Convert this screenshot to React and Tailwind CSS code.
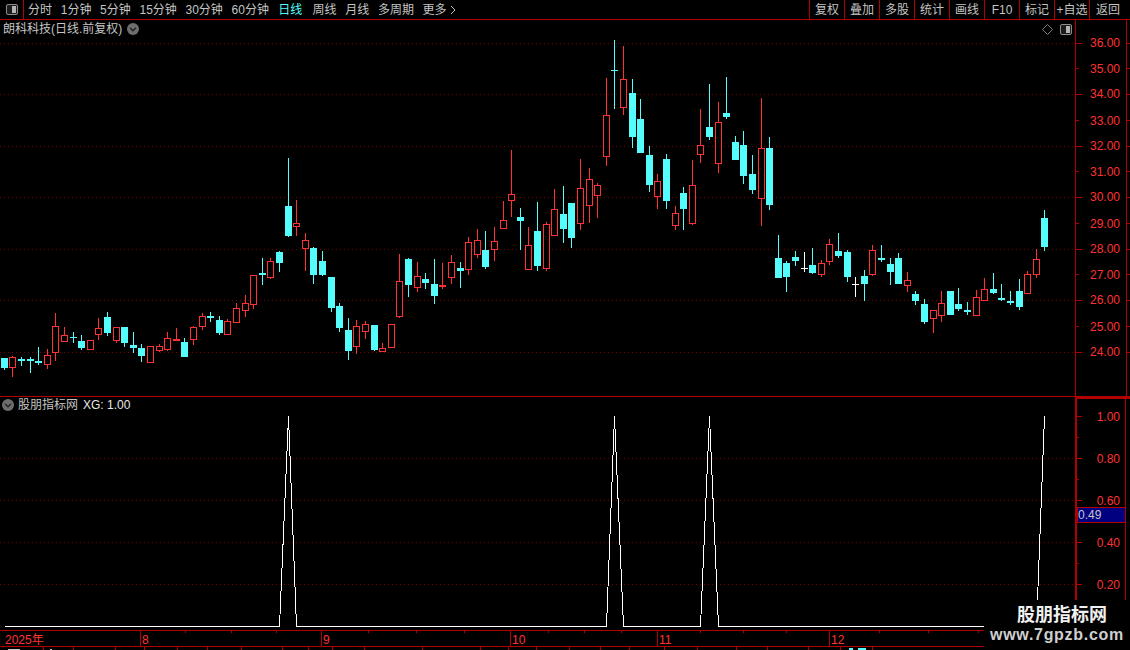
import React from 'react';

// [x, high, top, bottom, low, kind] kind: c = cyan solid, r = red hollow, R = red solid, w = white cross
const candles = [
  [4, 358, 358, 368, 370, 'c'], [12, 356, 357, 367, 377, 'r'], [21, 357, 359, 361, 366, 'c'], [30, 357, 359, 361, 373, 'c'],
  [38, 347, 361, 363, 365, 'c'], [47, 349, 355, 364, 369, 'r'], [55, 313, 326, 352, 361, 'r'], [64, 327, 335, 341, 342, 'r'],
  [73, 332, 337, 338, 343, 'c'], [81, 335, 341, 348, 350, 'c'], [90, 340, 340, 349, 349, 'r'], [98, 318, 328, 334, 340, 'r'],
  [107, 312, 317, 333, 336, 'c'], [116, 327, 327, 340, 343, 'r'], [124, 327, 327, 343, 347, 'c'], [133, 332, 345, 348, 353, 'c'],
  [141, 344, 348, 356, 362, 'c'], [150, 346, 346, 362, 362, 'r'], [159, 344, 346, 350, 352, 'r'], [167, 332, 338, 349, 351, 'r'],
  [176, 328, 339, 341, 341, 'R'], [184, 338, 342, 357, 357, 'c'], [193, 326, 327, 339, 345, 'r'], [202, 313, 316, 326, 330, 'r'],
  [210, 312, 316, 318, 322, 'c'], [219, 316, 320, 333, 335, 'c'], [227, 319, 321, 334, 334, 'r'], [236, 303, 308, 322, 323, 'r'],
  [245, 295, 303, 310, 317, 'r'], [253, 275, 275, 304, 309, 'r'], [262, 258, 273, 275, 285, 'c'], [270, 258, 261, 277, 279, 'r'],
  [279, 251, 252, 263, 272, 'c'], [288, 158, 206, 236, 237, 'c'], [296, 200, 223, 226, 236, 'r'], [305, 233, 240, 248, 271, 'r'],
  [313, 247, 248, 275, 284, 'c'], [322, 251, 261, 275, 276, 'c'], [331, 277, 277, 308, 312, 'c'], [339, 303, 306, 328, 332, 'c'],
  [348, 318, 330, 351, 360, 'c'], [356, 320, 326, 346, 354, 'r'], [365, 321, 324, 331, 339, 'r'], [374, 325, 325, 350, 351, 'c'],
  [382, 343, 348, 351, 351, 'r'], [391, 324, 324, 347, 348, 'r'], [399, 254, 281, 316, 318, 'r'], [408, 258, 259, 285, 297, 'c'],
  [417, 262, 276, 287, 292, 'r'], [425, 273, 279, 283, 289, 'c'], [434, 259, 284, 296, 304, 'c'], [442, 263, 285, 287, 289, 'R'],
  [451, 255, 262, 277, 284, 'r'], [460, 262, 268, 271, 288, 'c'], [468, 237, 242, 269, 275, 'r'], [477, 229, 240, 254, 258, 'r'],
  [485, 231, 250, 267, 269, 'c'], [494, 227, 241, 249, 261, 'r'], [503, 201, 220, 228, 228, 'r'], [511, 150, 194, 200, 217, 'r'],
  [520, 208, 217, 221, 250, 'c'], [528, 227, 245, 269, 269, 'r'], [537, 202, 231, 266, 271, 'c'], [546, 222, 224, 268, 271, 'r'],
  [554, 189, 209, 235, 235, 'r'], [563, 186, 214, 229, 243, 'c'], [571, 203, 203, 238, 248, 'c'], [580, 159, 188, 223, 230, 'r'],
  [589, 168, 179, 205, 223, 'r'], [597, 183, 185, 195, 218, 'r'], [606, 78, 115, 156, 166, 'r'], [614, 40, 70, 71, 109, 'c'],
  [623, 46, 79, 107, 115, 'r'], [632, 79, 93, 137, 148, 'c'], [640, 99, 119, 153, 153, 'c'], [649, 146, 155, 185, 192, 'c'],
  [657, 174, 181, 196, 209, 'r'], [666, 154, 159, 201, 209, 'c'], [675, 206, 213, 225, 230, 'r'], [683, 187, 193, 209, 230, 'c'],
  [692, 160, 185, 223, 225, 'r'], [700, 109, 145, 154, 163, 'r'], [709, 84, 127, 137, 140, 'c'], [718, 102, 122, 163, 173, 'r'],
  [726, 77, 113, 117, 119, 'c'], [735, 136, 142, 160, 160, 'c'], [743, 131, 145, 176, 184, 'c'], [752, 155, 174, 190, 194, 'c'],
  [761, 98, 148, 198, 226, 'r'], [769, 137, 148, 205, 210, 'c'], [778, 235, 258, 278, 278, 'c'], [786, 261, 263, 277, 292, 'c'],
  [795, 251, 257, 261, 266, 'c'], [804, 252, 268, 269, 272, 'w'], [812, 248, 265, 273, 274, 'c'], [821, 260, 263, 274, 277, 'r'],
  [829, 239, 244, 261, 265, 'r'], [838, 233, 251, 256, 258, 'c'], [847, 250, 252, 277, 282, 'c'], [855, 277, 284, 285, 297, 'w'],
  [864, 270, 276, 284, 301, 'c'], [872, 245, 250, 274, 276, 'r'], [881, 245, 258, 260, 262, 'c'], [890, 258, 264, 272, 285, 'c'],
  [898, 253, 258, 284, 284, 'c'], [907, 272, 280, 285, 292, 'r'], [915, 291, 294, 301, 305, 'c'], [924, 299, 304, 322, 324, 'c'],
  [933, 310, 310, 318, 333, 'r'], [941, 291, 303, 315, 322, 'r'], [950, 291, 291, 315, 315, 'c'], [958, 288, 304, 309, 311, 'c'],
  [967, 302, 310, 312, 315, 'c'], [976, 290, 297, 315, 315, 'r'], [984, 278, 289, 300, 301, 'r'], [993, 273, 289, 293, 294, 'c'],
  [1001, 284, 298, 300, 301, 'c'], [1010, 291, 301, 303, 305, 'c'], [1019, 279, 291, 307, 310, 'c'], [1027, 271, 274, 293, 294, 'r'],
  [1036, 249, 259, 274, 278, 'r'], [1044, 210, 218, 247, 251, 'c'],
];

const RED = '#ff3232';
const CYAN = '#54fcfc';
const LINE = '#b00000';
const DOT = '#700000';

const priceLabels = [36, 35, 34, 33, 32, 31, 30, 29, 28, 27, 26, 25, 24];
const priceY = (v) => Math.round(42.5 + (36 - v) * 25.75);
const indicatorLabels = [
  [1, 416], [0.8, 458], [0.6, 500], [0.4, 542], [0.2, 584],
];
const xgLine = '4.5,626.5 279.5,626.5 288.5,416.5 296.5,626.5 606.5,626.5 614.5,416.5 623.5,626.5 700.5,626.5 709.5,416.5 718.5,626.5 1036.5,626.5 1044.5,416.5';

const timeTicks = [185, 231, 276, 368, 416, 464, 548, 584, 621, 700, 743, 786, 879, 928, 978];
const stripTicks = [43, 73, 115, 144, 177, 207, 241, 282, 308, 332, 364, 422, 480, 508, 536, 569, 600, 629, 664, 697, 736, 767, 808, 840, 872];

const Candle = ({ c }) => {
  const [x, high, top, bottom, low, kind] = c;
  const color = kind === 'c' ? CYAN : kind === 'w' ? '#ffffff' : RED;
  const h = Math.max(bottom - top, 1);
  return (
    <g shapeRendering="crispEdges">
      <rect x={x} y={high} width="1" height={low - high} fill={color} />
      {kind === 'r' ? (
        <rect x={x - 2.5} y={top + 0.5} width="6" height={h} fill="#000" stroke={color} strokeWidth="1" />
      ) : (
        <rect x={x - 3} y={top} width="7" height={h} fill={color} />
      )}
    </g>
  );
};

const Chevron = () => (
  <svg width="12" height="12" viewBox="0 0 12 12" className="block shrink-0">
    <circle cx="6" cy="6" r="6" fill="#6e6e6e" />
    <path d="M3 4.8 L6 7.8 L9 4.8" fill="none" stroke="#222" strokeWidth="1.4" />
  </svg>
);

const PanelIcon = () => (
  <svg width="12" height="11" viewBox="0 0 12 11" className="block shrink-0">
    <rect x="0.5" y="0.5" width="11" height="10" rx="1.5" fill="#1c1c1c" stroke="#8c8c8c" />
    <rect x="6" y="2" width="4" height="7" fill="#b4b4b4" />
  </svg>
);

const tabs = [
  ['分时', ''], ['1分钟', ''], ['5分钟', ''], ['15分钟', ''], ['30分钟', ''], ['60分钟', ''],
  ['日线', 'mx-[0.6px] text-[#54fcfc]'], ['周线', 'ml-px'], ['月线', ''], ['多周期', ''],
];
const tools = ['复权', '叠加', '多股', '统计', '画线', 'F10', '标记', '+自选'];

export default function App() {
  return (
    <div className="relative w-[1130px] h-[650px] overflow-hidden bg-black text-xs leading-none text-[#c4c4c4] font-['Liberation_Sans','Noto_Sans_CJK_SC',sans-serif]">
      {/* toolbar */}
      <div className="flex h-5 border-b border-[#b00000]">
        <div className="flex w-6 items-center justify-center border-r border-[#b00000]">
          <PanelIcon />
        </div>
        <div className="flex items-center gap-[8.7px] pl-1">
          {tabs.map(([t, cls]) => (
            <span key={t} className={cls}>{t}</span>
          ))}
          <span className="flex items-center gap-[3px]">
            更多
            <svg width="6" height="10" viewBox="0 0 6 10" className="block">
              <path d="M1 1 L5 5 L1 9" fill="none" stroke="#c4c4c4" strokeWidth="1" />
            </svg>
          </span>
        </div>
        <div className="ml-auto flex">
          {tools.map((t) => (
            <span key={t} className="flex w-[35px] items-center justify-center border-l border-[#b00000]">{t}</span>
          ))}
          <span className="flex w-[41px] items-center border-l border-[#b00000] pl-[6px]">返回</span>
        </div>
      </div>

      {/* price panel */}
      <div className="flex h-[376px] border-b border-[#b00000] box-content">
        <div className="relative w-[1075px]">
          <svg className="absolute inset-0 block" width="1075" height="376" viewBox="0 20 1075 376">
            {[36, 34, 32, 30, 28, 26, 24].map((v) => (
              <line key={v} x1="0" x2="1075" y1={priceY(v) + 0.5} y2={priceY(v) + 0.5} stroke={DOT} strokeDasharray="1 3" />
            ))}
            {candles.map((c) => <Candle key={c[0]} c={c} />)}
          </svg>
          <div className="relative flex items-center gap-[5px] pl-[3px] pt-[3px]">
            <span>朗科科技(日线.前复权)</span>
            <Chevron />
          </div>
          <div className="absolute right-[3px] top-1 flex items-center gap-[7px]">
            <svg width="11" height="11" viewBox="0 0 11 11" className="block">
              <path d="M5.5 0.5 L10.5 5.5 L5.5 10.5 L0.5 5.5 Z" fill="none" stroke="#7c7c7c" />
            </svg>
            <PanelIcon />
          </div>
        </div>
        <div className="w-[55px] border-l border-[#b00000]">
          <svg className="block" width="54" height="376" viewBox="1076 20 54 376">
            {priceLabels.map((v) => (
              <g key={v}>
                <rect x="1076" y={priceY(v)} width={v % 2 === 0 ? 6 : 3} height="1" fill={LINE} />
                <text x="1120" y={priceY(v) + (v % 2 === 0 ? 4 : 5)} textAnchor="end" fill={RED} fontSize="12">{v.toFixed(2)}</text>
                <rect x="1127" y={priceY(v)} width="3" height="1" fill={LINE} />
              </g>
            ))}
            <rect x="1126" y="20" width="1" height="376" fill={LINE} />
          </svg>
        </div>
      </div>

      {/* indicator panel */}
      <div className="flex h-[233px]">
        <div className="relative w-[1075px]">
          <svg className="absolute inset-0 block" width="1075" height="233" viewBox="0 397 1075 233">
            {[458, 500, 542, 584].map((y) => (
              <line key={y} x1="0" x2="1075" y1={y + 0.5} y2={y + 0.5} stroke={DOT} strokeDasharray="1 3" />
            ))}
            <polyline points={xgLine} fill="none" stroke="#fff" strokeWidth="1" shapeRendering="crispEdges" />
          </svg>
          <div className="relative flex items-center gap-1 pl-[2px] pt-[2px]">
            <Chevron />
            <span>股朋指标网</span>
            <span className="ml-[1px] text-[#e8e8e8]">XG: 1.00</span>
          </div>
        </div>
        <div className="relative w-[55px] border-l-2 border-t-2 border-[#b00000]">
          <svg className="block" width="53" height="231" viewBox="1077 399 53 231">
            {indicatorLabels.map(([v, y]) => (
              <g key={y}>
                <rect x="1077" y={y} width="5" height="1" fill={LINE} />
                <text x="1120" y={y + 5} textAnchor="end" fill={RED} fontSize="12">{v.toFixed(2)}</text>
              </g>
            ))}
            {[437, 479, 521, 563, 605].map((y) => (
              <rect key={y} x="1077" y={y} width="2" height="1" fill={LINE} />
            ))}
            <rect x="1125" y="399" width="1" height="231" fill={LINE} />
          </svg>
          <div className="absolute left-0 top-[108px] flex h-4 w-[49px] items-center border border-[#b00000] bg-[#000080] text-[#c4c4c4]">0.49</div>
        </div>
      </div>

      {/* time axis */}
      <div className="relative flex h-[17px] w-[984px] border-y border-[#b00000] text-[#ff3232]">
        <span className="w-[140px] pl-[5px] pt-[3px]">2025年</span>
        <span className="w-[181px] border-l border-[#b00000] pl-[1px] pt-[3px]">8</span>
        <span className="w-[189px] border-l border-[#b00000] pl-[1px] pt-[3px]">9</span>
        <span className="w-[147px] border-l border-[#b00000] pl-[1px] pt-[3px]">10</span>
        <span className="w-[172px] border-l border-[#b00000] pl-[1px] pt-[3px]">11</span>
        <span className="flex-1 border-l border-[#b00000] pl-[1px] pt-[3px]">12</span>
        <svg className="absolute left-0 top-0" width="984" height="3">
          {timeTicks.map((x) => <rect key={x} x={x} y="0" width="1" height="2" fill={LINE} />)}
        </svg>
      </div>

      {/* cut off bottom row */}
      <svg className="block" width="984" height="4">
        {stripTicks.map((x) => <rect key={x} x={x} y="0" width="1" height="4" fill={LINE} />)}
        <rect x="8" y="2" width="12" height="2" fill="#c4c4c4" />
        <rect x="50" y="2" width="2" height="2" fill="#c4c4c4" />
        <rect x="849" y="1" width="4" height="3" fill={CYAN} />
        <rect x="858" y="1" width="8" height="3" fill={CYAN} />
      </svg>

      {/* site watermark */}
      <div className="absolute bottom-0 right-0 flex h-[50px] w-[146px] flex-col items-center bg-black pt-[4px]">
        <span className="ml-[10px] text-lg font-bold leading-[22px] text-[#f0f0f0]">股朋指标网</span>
        <span className="text-base font-bold leading-[18px] tracking-[0.7px] text-[#cfcfcf]">www.7gpzb.com</span>
      </div>
    </div>
  );
}
